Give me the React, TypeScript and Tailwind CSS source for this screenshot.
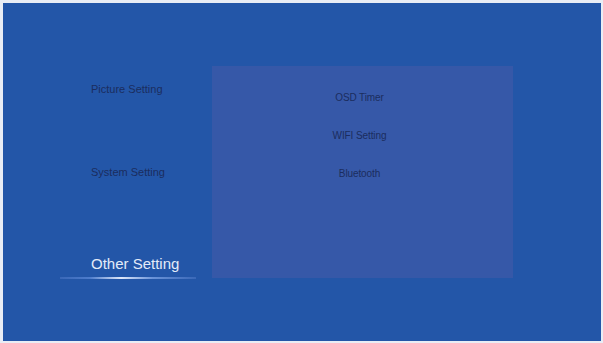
const menu = ["Picture Setting", "System Setting"];
const items = ["OSD Timer", "WIFI Setting", "Bluetooth"];

export default function App() {
  return (
    <div className="h-[343px] w-[603px] bg-[#e9edf5] pt-[3px] pr-[2px] pb-[2px] pl-[3px] font-['Liberation_Sans',Arial,sans-serif]">
      <div className="flex h-full bg-[#2356a8] pt-[63px]">
        {/* left menu */}
        <div className="flex w-[209px] flex-col">
          <div className="mt-[17px] flex flex-col gap-[70px] pl-[88px]">
            {menu.map((m) => (
              <div key={m} className="text-[11px] leading-[13px] text-[#1b2d5e]">
                {m}
              </div>
            ))}
          </div>
          <div className="mt-[76px] pl-[88px] text-[15px] leading-[18px] text-[#e4ebf8]">
            Other Setting
          </div>
          <div className="mt-[4px] ml-[57px] h-[2px] w-[136px] bg-[linear-gradient(90deg,#3a68b8_0%,#4d7ccc_22%,#dfe8fa_45%,#6a93d8_68%,#3a68b8_100%)]" />
        </div>

        {/* right panel */}
        <div className="flex h-[212px] w-[301px] flex-col items-center bg-[#3658a8] pt-[26px] pr-[6px]">
          <div className="flex flex-col items-center gap-[26px]">
            {items.map((it) => (
              <div key={it} className="text-[10px] leading-[12px] tracking-[-0.1px] text-[#1b2d5e]">
                {it}
              </div>
            ))}
          </div>
        </div>
      </div>
    </div>
  );
}
